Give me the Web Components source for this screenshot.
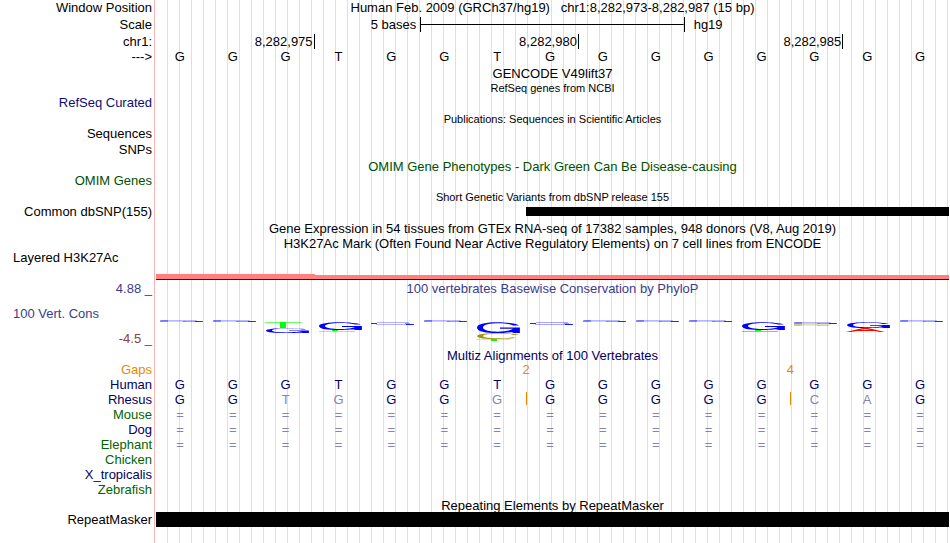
<!DOCTYPE html>
<html lang="en">
<head>
<meta charset="utf-8">
<title>Human chr1:8,282,973-8,282,987</title>
<style>
  :root {
    --color-navy: #0c0c78;
    --color-species: #000064;
    --color-green: #006400;
    --color-omim: #005000;
    --color-gap: #e68a00;
    --color-conserved: #3c3c8c;
    --color-negative: #8c3c3c;
    --color-faded: #8484b4;
    --color-grid: #dcdcfa;
    --color-edge: #ffb4b4;
    --label-width: 154px;
  }

  body {
    margin: 0;
    background: #fff;
    color: #000;
    font-family: "Liberation Sans", Arial, sans-serif;
    font-size: 13px;
    line-height: 15px;
  }
</style>
</head>
<body>
<genome-browser>
  <track-row>
    <span slot="label">Window Position</span>
    <track-title>Human Feb. 2009 (GRCh37/hg19)&nbsp;&nbsp; chr1:8,282,973-8,282,987 (15 bp)</track-title>
  </track-row>
  <track-row gap="2">
    <span slot="label">Scale</span>
    <scale-bar from="6" to="11" text="5 bases" assembly="hg19"></scale-bar>
  </track-row>
  <track-row gap="2">
    <span slot="label">chr1:</span>
    <position-ruler marks="3:8,282,975 8:8,282,980 13:8,282,985"></position-ruler>
  </track-row>
  <track-row>
    <span slot="label">---&gt;</span>
    <base-row bases="GGGTGGTGGGGGGGG"></base-row>
  </track-row>

  <track-row gap="2"><track-title>GENCODE V49lift37</track-title></track-row>
  <track-row compact><track-title small>RefSeq genes from NCBI</track-title></track-row>
  <track-row style="color: var(--color-navy)"><span slot="label">RefSeq Curated</span></track-row>

  <track-row gap="2" compact><track-title small>Publications: Sequences in Scientific Articles</track-title></track-row>
  <track-row><span slot="label">Sequences</span></track-row>
  <track-row gap="1"><span slot="label">SNPs</span></track-row>

  <track-row gap="2" compact style="color: var(--color-omim)">
    <track-title>OMIM Gene Phenotypes - Dark Green Can Be Disease-causing</track-title>
  </track-row>
  <track-row style="color: var(--color-omim)"><span slot="label">OMIM Genes</span></track-row>

  <track-row gap="2" compact><track-title small>Short Genetic Variants from dbSNP release 155</track-title></track-row>
  <track-row>
    <span slot="label">Common dbSNP(155)</span>
    <feature-bar from="8" thin></feature-bar>
  </track-row>

  <track-row gap="2">
    <track-title>Gene Expression in 54 tissues from GTEx RNA-seq of 17382 samples, 948 donors (V8, Aug 2019)</track-title>
  </track-row>
  <track-row compact>
    <track-title>H3K27Ac Mark (Often Found Near Active Regulatory Elements) on 7 cell lines from ENCODE</track-title>
  </track-row>
  <track-row align="left"><span slot="label">Layered H3K27Ac</span></track-row>
  <track-row gap="9" auto><signal-band peak="3"></signal-band></track-row>

  <track-row gap="1" style="color: var(--color-conserved)">
    <span slot="label">4.88 _</span>
    <track-title>100 vertebrates Basewise Conservation by PhyloP</track-title>
  </track-row>
  <track-row gap="10" auto split style="color: var(--color-conserved)">
    <span slot="label">100 Vert. Cons</span>
    <span slot="label" style="color: var(--color-negative)">-4.5 _</span>
    <conservation-logo></conservation-logo>
  </track-row>

  <track-row gap="2" compact style="color: var(--color-species)">
    <track-title>Multiz Alignments of 100 Vertebrates</track-title>
  </track-row>
  <track-row style="color: var(--color-gap)">
    <span slot="label">Gaps</span>
    <gap-row gaps="7:2 12:4"></gap-row>
  </track-row>
  <track-row style="color: var(--color-species)">
    <span slot="label">Human</span>
    <base-row bases="GGGTGGTGGGGGGGG"></base-row>
  </track-row>
  <track-row style="color: var(--color-species)">
    <span slot="label">Rhesus</span>
    <base-row bases="GGTGGGGGGGGGCAG" faded="3 4 7 13 14" inserts="8 13"></base-row>
  </track-row>
  <track-row style="color: var(--color-green)">
    <span slot="label">Mouse</span>
    <base-row bases="==============="></base-row>
  </track-row>
  <track-row style="color: var(--color-species)">
    <span slot="label">Dog</span>
    <base-row bases="==============="></base-row>
  </track-row>
  <track-row style="color: var(--color-green)">
    <span slot="label">Elephant</span>
    <base-row bases="==============="></base-row>
  </track-row>
  <track-row style="color: var(--color-green)"><span slot="label">Chicken</span></track-row>
  <track-row style="color: var(--color-species)"><span slot="label">X_tropicalis</span></track-row>
  <track-row style="color: var(--color-green)"><span slot="label">Zebrafish</span></track-row>

  <track-row gap="1" compact><track-title>Repeating Elements by RepeatMasker</track-title></track-row>
  <track-row>
    <span slot="label">RepeatMasker</span>
    <feature-bar from="1"></feature-bar>
  </track-row>
</genome-browser>

<script>
const BASE_COUNT = 15;

// shared by every element that lines up with the bases
const baseGrid = `
  :host {
    display: grid;
    grid-template-columns: repeat(${BASE_COUNT}, minmax(0, 1fr));
    white-space: nowrap;
  }
`;

/**
 * Genome Browser
 *
 * Page container. Draws the red edge of the label column and the
 * vertical guide lines behind all tracks.
 */
class GenomeBrowser extends HTMLElement {
  constructor() {
    super();
    this.attachShadow({ mode: 'open' }).innerHTML = `
    <style>
      :host {
        display: grid;
        grid-template-columns: var(--label-width) 1px minmax(0, 1fr);
        column-gap: 0;
        min-height: 100vh;
      }
      .edge {
        grid-area: 1 / 2;
        background: var(--color-edge);
      }
      .guides {
        grid-area: 1 / 3;
        margin-left: 1px;
        background: repeating-linear-gradient(to right,
          transparent 0 11px, var(--color-grid) 11px 12px);
      }
      .tracks {
        grid-area: 1 / 1 / 2 / -1;
        padding-right: 1px;
      }
    </style>
    <div class="edge"></div>
    <div class="guides"></div>
    <div class="tracks"><slot></slot></div>
    `;
  }
}

/**
 * Track Row
 *
 * One line of the picture:
 *  - label slot, on the left of the edge
 *  - default slot, on the guide lines
 */
class TrackRow extends HTMLElement {
  constructor() {
    super();
    this.attachShadow({ mode: 'open' });
  }

  connectedCallback() {
    this.shadowRoot.innerHTML = `
    <style>
      :host {
        display: grid;
        grid-template-columns: var(--label-width) minmax(0, 1fr);
        column-gap: 2px;
        height: 15px;
        margin-top: ${this.getAttribute('gap') || 0}px;
      }
      :host([compact]) { height: 14px; }
      :host([auto]) { height: auto; }
      .label {
        display: flex;
        flex-direction: column;
        align-items: flex-end;
        padding: 0 2px 0 13px;
        white-space: nowrap;
      }
      :host([align="left"]) .label { align-items: flex-start; }
      :host([split]) .label { justify-content: space-between; min-height: 40px; }
      :host([split]) ::slotted([slot="label"]:first-child) { align-self: flex-start; }
    </style>
    <div class="label"><slot name="label"></slot></div>
    <div><slot></slot></div>
    `;
  }
}

class TrackTitle extends HTMLElement {
  constructor() {
    super();
    this.attachShadow({ mode: 'open' }).innerHTML = `
    <style>
      :host { display: block; text-align: center; white-space: nowrap; }
      :host([small]) { font-size: 11px; line-height: 14px; }
    </style>
    <slot></slot>
    `;
  }
}

class ScaleBar extends HTMLElement {
  constructor() {
    super();
    this.attachShadow({ mode: 'open' });
  }

  connectedCallback() {
    const from = this.getAttribute('from');
    const to = this.getAttribute('to');
    this.shadowRoot.innerHTML = `
    <style>
      ${baseGrid}
      .text { grid-column: 1 / ${from}; text-align: right; padding-right: 4px; }
      .bar {
        grid-column: ${from} / ${to};
        border: solid #000;
        border-width: 0 1px;
        background: linear-gradient(#000, #000) center / 100% 1px no-repeat;
      }
      .assembly { grid-column: ${to} / -1; padding-left: 9px; }
    </style>
    <span class="text">${this.getAttribute('text')}</span>
    <span class="bar"></span>
    <span class="assembly">${this.getAttribute('assembly')}</span>
    `;
  }
}

class PositionRuler extends HTMLElement {
  constructor() {
    super();
    this.attachShadow({ mode: 'open' });
  }

  connectedCallback() {
    const marks = this.getAttribute('marks').split(' ').map((mark) => mark.split(':'));
    this.shadowRoot.innerHTML = `
    <style>
      ${baseGrid}
      span {
        grid-row: 1;
        height: 15px;
        border-right: 1px solid #000;
        padding-right: 1px;
        text-align: right;
      }
    </style>
    ${marks
      .map(([base, text]) => `<span style="grid-column: ${base - 1} / ${+base + 1}">${text}</span>`)
      .join('')}
    `;
  }
}

/**
 * Base Row
 *
 * One letter for each base. "faded" lists the bases that differ from human,
 * "inserts" the ones with an insert mark before them.
 */
class BaseRow extends HTMLElement {
  constructor() {
    super();
    this.attachShadow({ mode: 'open' });
  }

  _list(name) {
    return (this.getAttribute(name) || '').split(' ').map(Number);
  }

  connectedCallback() {
    const faded = this._list('faded');
    const inserts = this._list('inserts');
    const cells = [...this.getAttribute('bases')].map((base, i) => {
      const names = [];
      if (base === '=' || faded.includes(i + 1)) names.push('faded');
      if (inserts.includes(i + 1)) names.push('insert');
      return `<span class="${names.join(' ')}">${base}</span>`;
    });
    this.shadowRoot.innerHTML = `
    <style>
      ${baseGrid}
      span { padding-right: 5px; text-align: center; }
      .faded { color: var(--color-faded); }
      .insert {
        background: linear-gradient(var(--color-gap), var(--color-gap)) left top / 1px 13px no-repeat;
      }
    </style>
    ${cells.join('')}
    `;
  }
}

class GapRow extends HTMLElement {
  constructor() {
    super();
    this.attachShadow({ mode: 'open' });
  }

  connectedCallback() {
    const gaps = this.getAttribute('gaps').split(' ').map((gap) => gap.split(':'));
    this.shadowRoot.innerHTML = `
    <style>
      ${baseGrid}
      span { grid-row: 1; text-align: center; }
    </style>
    ${gaps
      .map(([base, size]) => `<span style="grid-column: ${base} / span 2">${size}</span>`)
      .join('')}
    `;
  }
}

class FeatureBar extends HTMLElement {
  constructor() {
    super();
    this.attachShadow({ mode: 'open' });
  }

  connectedCallback() {
    this.shadowRoot.innerHTML = `
    <style>
      ${baseGrid}
      :host { height: 15px; align-items: center; }
      div { grid-column: ${this.getAttribute('from')} / -1; height: 15px; background: #000; }
      :host([thin]) div { height: 9px; }
    </style>
    <div></div>
    `;
  }
}

class SignalBand extends HTMLElement {
  constructor() {
    super();
    this.attachShadow({ mode: 'open' });
  }

  connectedCallback() {
    const peak = Number(this.getAttribute('peak'));
    this.shadowRoot.innerHTML = `
    <style>
      ${baseGrid}
      :host { align-items: end; border-bottom: 1px solid #640014; }
      div { height: 4px; background: #ff8080; }
      .high { grid-column: 1 / ${peak + 1}; height: 5px; }
      .low { grid-column: ${peak + 1} / -1; }
    </style>
    <div class="high"></div>
    <div class="low"></div>
    `;
  }
}

/**
 * Conservation Logo
 *
 * A stack of flat marks for each base. Marks are 43 units wide in
 * a cell of 53, and y counts down from the top of the plot.
 */
const BLUE = '#0000ff';
const GREEN = '#00ff00';
const OLIVE = '#a09600';
const RED = '#ff0000';

const rect = (x, y, w, h, fill, opacity = 1) =>
  `<rect x="${x}" y="${y}" width="${w}" height="${h}" fill="${fill}" opacity="${opacity}"/>`;

const sliver = (y, color = BLUE) =>
  rect(5, y, 36, 1, color, 0.28) +
  rect(4, y, 8, 2, color, 0.35) +
  rect(4, y + 1, 26, 1, color, 0.2) +
  rect(27, y + 1, 12, 1, color, 0.4) +
  (color === BLUE ? rect(39, y + 1, 8, 1, color, 0.85) : '');

const ring = (top, h, color, hook) => {
  const y = (part) => top + part * h;
  const tail = hook
    ? `L37 ${y(0.86)} L41 ${y(1)} H47 V${y(0.5)} H27 V${y(0.62)} H40`
    : `L43 ${y(0.8)} L39 ${y(0.7)}`;
  return `<path fill="${color}" d="M46 ${y(0.32)} C40 ${y(-0.06)} 4 ${y(-0.14)} 4 ${y(0.5)}
    C4 ${y(1.16)} 32 ${y(1.04)} 40 ${y(0.88)} ${tail}
    C36 ${y(0.96)} 10 ${y(1)} 10 ${y(0.5)}
    C10 ${y(0)} 36 ${y(0.04)} 40 ${y(0.32)} Z"/>`;
};

const flat = (y, strength) =>
  rect(10, y, 32, 1, BLUE, strength) +
  rect(4, y + 1, 6, 1, BLUE, 0.85) +
  rect(38, y + 1, 5, 1, BLUE, 0.4) +
  rect(9, y + 2, 30, 1, BLUE, strength) +
  rect(39, y + 2, 8, 1, BLUE, 0.9);

const stem = (y, h, line = GREEN) => rect(3, y, 37, 1, line, 0.6) + rect(18, y, 6, h, GREEN);

const LOGO = [
  sliver(2),
  sliver(2),
  stem(4, 6) + ring(10, 5, BLUE, true),
  ring(4, 8, BLUE, true) + rect(4, 13, 36, 1, OLIVE, 0.4) + rect(17, 12, 6, 1, GREEN),
  flat(4, 0.3),
  sliver(2),
  ring(4, 11, BLUE, true) + ring(15, 6, OLIVE, false) + rect(3, 21, 34, 1, GREEN, 0.3) + rect(18, 21, 6, 2, GREEN),
  flat(4, 0.35),
  sliver(2),
  sliver(2),
  sliver(2),
  ring(4, 8, BLUE, true) + rect(4, 13, 36, 1, RED, 0.45) + rect(17, 12, 6, 1, GREEN),
  sliver(4) + sliver(6, OLIVE),
  ring(4, 6, BLUE, true) +
    `<path fill="${RED}" d="M3 14 L20 10 H25 L42 14 H37 L32 13 H14 L8 14 Z M22 11 L17 12 H28 Z" fill-rule="evenodd"/>`,
  sliver(2),
];

class ConservationLogo extends HTMLElement {
  constructor() {
    super();
    this.attachShadow({ mode: 'open' }).innerHTML = `
    <style>
      ${baseGrid}
      :host { padding-top: 12px; }
      svg { display: block; width: 100%; height: 24px; }
    </style>
    ${LOGO.map(
      (marks) => `<svg viewBox="0 0 53 24" preserveAspectRatio="none" aria-hidden="true">${marks}</svg>`
    ).join('')}
    `;
  }
}

customElements.define('genome-browser', GenomeBrowser);
customElements.define('track-row', TrackRow);
customElements.define('track-title', TrackTitle);
customElements.define('scale-bar', ScaleBar);
customElements.define('position-ruler', PositionRuler);
customElements.define('base-row', BaseRow);
customElements.define('gap-row', GapRow);
customElements.define('feature-bar', FeatureBar);
customElements.define('signal-band', SignalBand);
customElements.define('conservation-logo', ConservationLogo);
</script>
</body>
</html>
